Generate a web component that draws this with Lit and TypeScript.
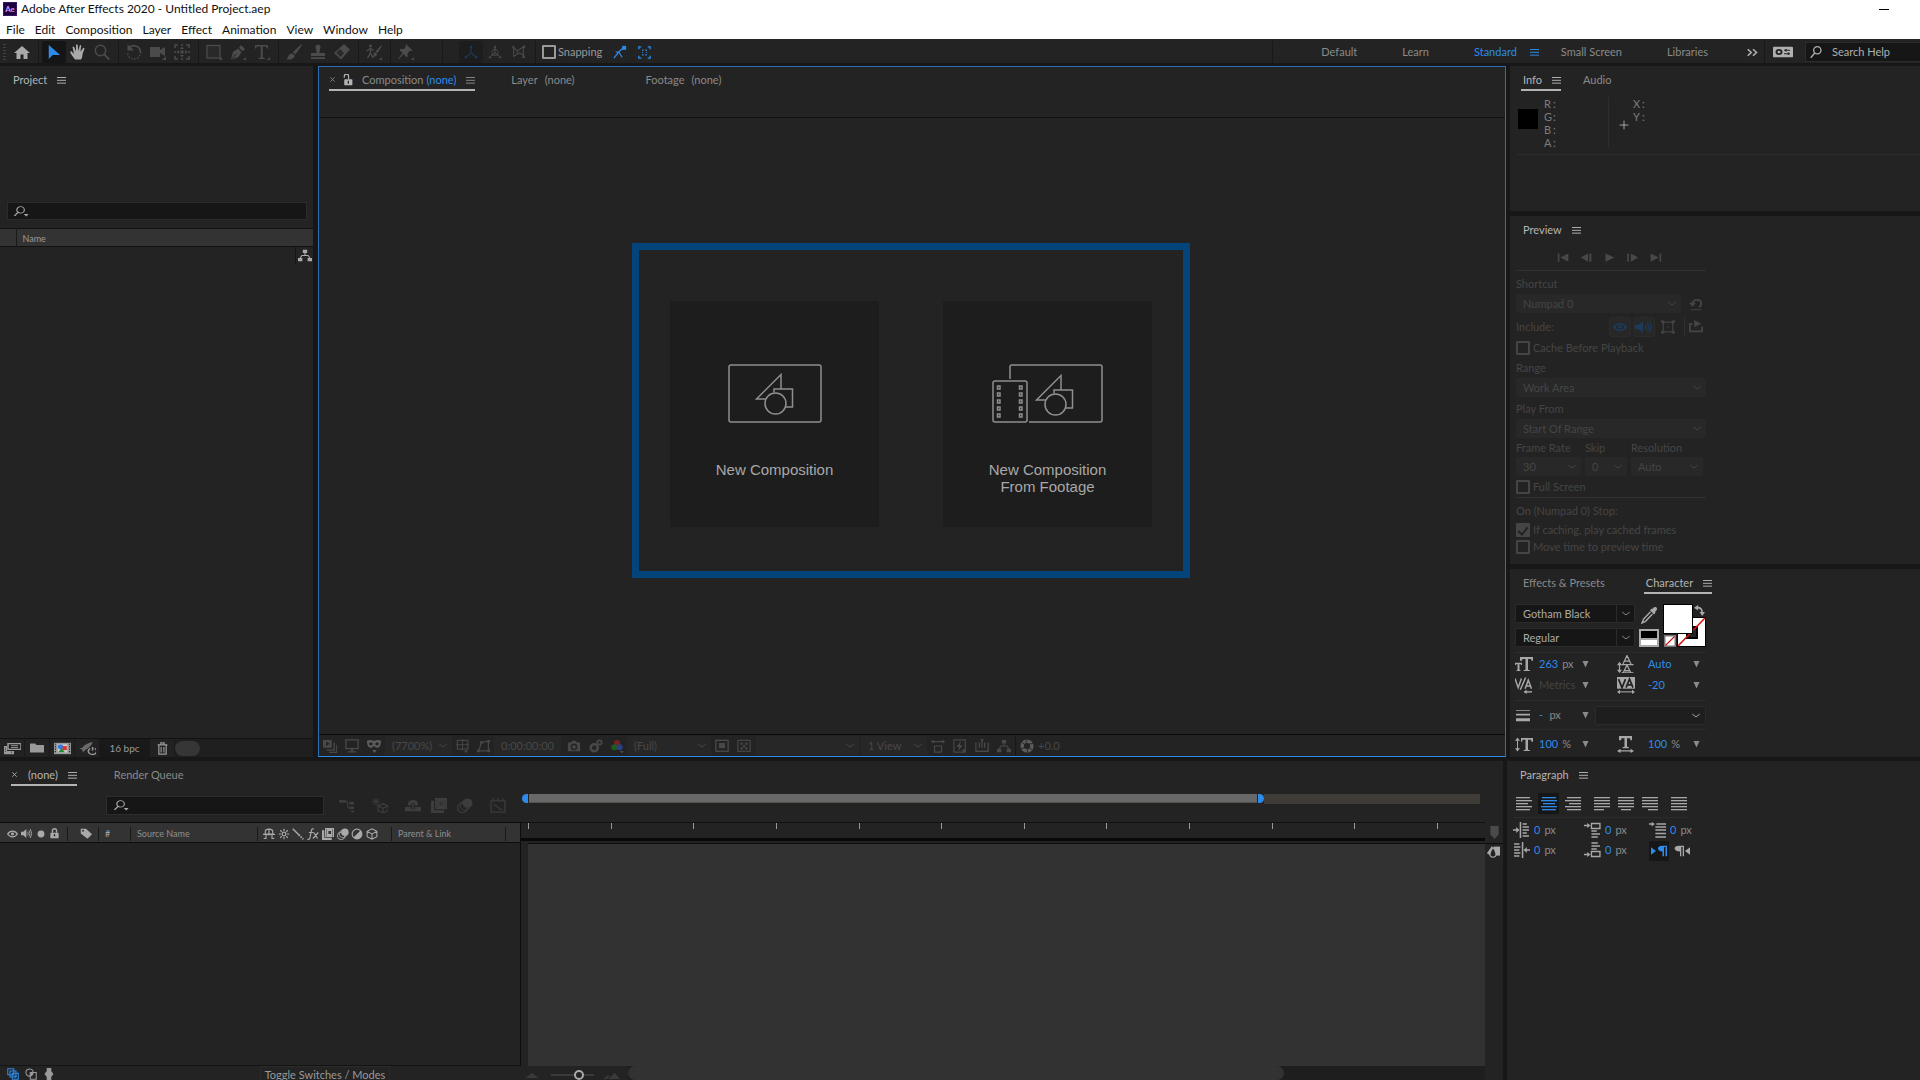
import { LitElement, html, svg, css, nothing, TemplateResult } from "lit";
import { customElement } from "lit/decorators.js";
import { classMap } from "lit/directives/class-map.js";

/* ---------- icons ---------- */

const icons: Record<string, TemplateResult> = {
  logo: svg`<rect width="16" height="16" rx="1" fill="#1f0040"/><rect x=".5" y=".5" width="15" height="15" fill="none" stroke="#3b1a66"/><text x="8" y="11.5" text-anchor="middle" font-size="9" font-weight="700" font-family="Lato, sans-serif" fill="#cf9bff">Ae</text>`,
  menu: svg`<path d="M0 4h16M0 8.500h16M0 13h16" stroke="currentColor" stroke-width="1.600"/>`,
  home: svg`<path d="M8 1 0 8.500h2.500V15h4v-5h3v5h4V8.500H16z" fill="currentColor"/>`,
  arrow: svg`<path d="M2 0v16l4.500-4.500H15z" fill="currentColor"/>`,
  hand: svg`<path d="M5 15.500C3 13 1 10 .3 8.500c-.5-1 .8-1.600 1.600-.7L4 10 2.600 3.500c-.2-1.200 1.200-1.500 1.600-.4L6 7.500 6 1.200c0-1.200 1.600-1.200 1.700 0L8.200 7l1.500-5.300c.3-1.100 1.700-.8 1.500.4L10.400 7.800 13 4.200c.7-.9 1.800-.2 1.400.8-1 2.500-1.700 4-2 6.500-.2 2-.8 3-1.400 4z" fill="currentColor"/>`,
  zoom: svg`<circle cx="6.500" cy="6.500" r="5.200" fill="none" stroke="currentColor" stroke-width="1.400"/><path d="m10.300 10.300 5 5.200" stroke="currentColor" stroke-width="1.800"/>`,
  search: svg`<circle cx="9.500" cy="6" r="4.200" fill="none" stroke="currentColor" stroke-width="1.500"/><path d="M6.700 9 2 14.500" stroke="currentColor" stroke-width="1.600"/>`,
  searchMenu: svg`<circle cx="7" cy="6" r="4" fill="none" stroke="currentColor" stroke-width="1.200"/><path d="M4.300 9 .5 13.500" stroke="currentColor" stroke-width="1.500"/><path d="M10.500 11h5L13 14z" fill="currentColor"/>`,
  rotate: svg`<path d="M3.500 3.500A6.500 6.500 0 0 1 14.500 8" fill="none" stroke="currentColor" stroke-width="1.600"/><path d="M14.500 8a6.500 6.500 0 1 1-13 1" fill="none" stroke="currentColor" stroke-width="1.500" stroke-dasharray="1.500 1.500"/><path d="M1.500 0v6.500H8z" fill="currentColor"/>`,
  camera: svg`<path d="M0 3h10v3l5-3v9l-5-3v4H0z" fill="currentColor"/><path d="M16 12v4h-4z" fill="currentColor"/>`,
  pan: svg`<path d="M1 4V1h3M12 1h3v3M15 12v3h-3M4 15H1v-3M7 1h2M7 15h2M1 7v2M15 7v2" fill="none" stroke="currentColor" stroke-width="1.500"/><circle cx="8" cy="8" r="1.800" fill="currentColor"/><path d="m8 2.500 2 2.500H6zM8 13.500 6 11h4zM2.500 8 5 6v4zM13.500 8 11 10V6z" fill="currentColor"/>`,
  rect: svg`<rect x="1" y="1.500" width="13" height="12.500" fill="#292929" stroke="currentColor" stroke-width="1.300"/><path d="M16 13v3h-3z" fill="currentColor"/>`,
  pen: svg`<path d="M1 15.500 3 8l5-3.500L11.500 8 8.500 13zM9 3.500 11 1l4 4-2.500 2.300z" fill="currentColor"/><path d="m2 14.500 4-4.500" stroke="#232323"/><path d="M16 13v3h-3z" fill="currentColor"/>`,
  type: svg`<path d="M1 1h13v3.500h-1.300L12.300 2.500H8.700v11l2 .5v1h-6v-1l2-.5v-11H2.700L2.300 4.500H1z" fill="currentColor"/><path d="M16 13v3h-3z" fill="currentColor"/>`,
  brush: svg`<path d="M15.500 0 16 1 9.500 10.500 6.800 8.300zM6 9.300l2.700 2.200C8.500 15 4 16 0 15.500c2.500-1 1.700-5.500 6-6.200z" fill="currentColor"/>`,
  stamp: svg`<path d="M5.500 3a2.500 2.500 0 0 1 5 0c0 2-1.200 3-1 6H15v3H1V9h5.500c.2-3-1-4-1-6zM1 13.300h14V15H1z" fill="currentColor"/>`,
  eraser: svg`<path d="M10 0 16 5.500 7 15.500 0 9z" fill="currentColor"/><path d="m2.300 8.800 3.600-3.900 4.200 4-3.500 4z" fill="#2a2a2a"/>`,
  roto: svg`<circle cx="4.500" cy="2" r="1.500" fill="currentColor"/><path d="M4.500 4v5l-3 5M4.500 9l2.500 5M.5 7l4-2.500 3 2" fill="none" stroke="currentColor" stroke-width="1.400"/><path d="M15.500 1 16 2l-4.500 7-2-1.500zM9 8.300l2 1.500c0 2.700-2.500 3.200-4.500 3 1.500-1 .5-3.800 2.500-4.500zM16 13v3h-3z" fill="currentColor"/>`,
  pin: svg`<path d="M8 0 14.500 6.500l-1.500.7-1-.4-2.500 2.700.3 3-1.200.7L5.400 10 1 15l-.8-.5L4.500 9 1.500 6l1-1.200 3 .4L8 2.500 7.500 1z" fill="currentColor"/><path d="M16 13v3h-3z" fill="currentColor"/>`,
  axis: svg`<path d="M8 1v8L2 14M8 9l6 5" fill="none" stroke="currentColor" stroke-width="1.200"/><path d="m8 0 1.800 3H6.200zM.5 15.500 2 12l2 2.500zM15.500 15.500 14 12l-2 2.500z" fill="currentColor"/>`,
  axisWorld: svg`<path d="M8 2v7l-5 4M8 9l5 4" fill="none" stroke="currentColor" stroke-width="1.200"/><circle cx="8" cy="8.500" r="3.600" fill="none" stroke="currentColor"/><path d="m8 0 1.800 3H6.200zM.5 15.500 2 12l2 2.500zM15.500 15.500 14 12l-2 2.500z" fill="currentColor"/>`,
  axisView: svg`<path d="M2 3l4 4 7-5v10l-4-3-7 4zM6 7v3M2 3v10" fill="none" stroke="currentColor" stroke-width="1.200"/><path d="m0 1 3.500 1L1 4.500zM15 0v4l-3.500-2zM15 15l-4-.5L14 11z" fill="currentColor"/>`,
  snapEdge: svg`<path d="M1 15 6.500 8l5-4.500M6.500 8l4 6M6.500 8H3" fill="none" stroke="currentColor" stroke-width="1.400"/><rect x="10.500" y="1" width="4.500" height="4.500" fill="currentColor"/>`,
  snapFrame: svg`<path d="M1 4V1h3M12 1h3v3M15 12v3h-3M4 15H1v-3" fill="none" stroke="currentColor" stroke-width="1.600"/><path d="M5 5h2M9 5h2M5 11h2M9 11h2M5 8h1M10 8h1" stroke="currentColor" stroke-width="1.500"/>`,
  more: svg`<path d="m2 4 4 4-4 4M8 4l4 4-4 4" fill="none" stroke="currentColor" stroke-width="2"/>`,
  sync: svg`<rect x="0" y="2" width="20" height="12" rx="1" fill="currentColor"/><circle cx="6" cy="8" r="2.500" fill="none" stroke="#232323" stroke-width="2"/><path d="M11 6h6M11 10h6" stroke="#232323" stroke-width="1.400"/><path d="M13 4.500v3M15.500 8.500v3" stroke="#232323" stroke-width="1.400"/>`,
  lock: svg`<rect x="2" y="7" width="12" height="8" rx="1" fill="currentColor"/><path d="M5 7V4a3 3 0 0 1 6 0v3" fill="none" stroke="currentColor" stroke-width="2"/><path d="M8 9v3" stroke="#232323" stroke-width="2"/>`,
  unlock: svg`<rect x="2" y="7" width="13" height="8" rx="1" fill="currentColor"/><path d="M2 5V3.500a3 3 0 0 1 7 0V7" fill="none" stroke="currentColor" stroke-width="1.800"/><path d="M8.500 9v4" stroke="#232323" stroke-width="2"/>`,
  flow: svg`<path d="M5.500 1h5v4h-5zM0 11h5v4H0zM11 11h5v4h-5z" fill="currentColor"/><path d="M8 5v3M2.500 11l2-3h7l2 3" fill="none" stroke="currentColor" stroke-width="1.300"/>`,
  interpret: svg`<path d="M5 2h13v7H5z" fill="none" stroke="currentColor" stroke-width="1.500"/><path d="M8 4.500h7M8 6.800h7" stroke="currentColor"/><path d="M1 5h3v6h7v4H1z" fill="currentColor"/><path d="M2.500 7v6M8 12.500h2" stroke="#232323" stroke-dasharray="1 1"/>`,
  folder: svg`<path d="M0 2h6l1.500 2H16v10H0z" fill="currentColor"/>`,
  comp: svg`<path d="M0 1h18v14H0z" fill="currentColor"/><path d="M1.500 2v12M16.500 2v12" stroke="#232323" stroke-width="1.200" stroke-dasharray="1.500 1.500"/><rect x="4" y="3" width="10" height="10" fill="#d0d0d0"/><circle cx="7" cy="6" r="2.800" fill="#2d7ceb"/><path d="M9 5h4.500v5H9z" fill="#d33"/><path d="m4.500 12.500 3.500-5 3.500 5z" fill="#2a8a3a"/>`,
  launch: svg`<path d="M13 0C9 1 5 3 3 7l-3 1 2.500 1L4 13l1.500-3C9 8 12 4 13 0z" fill="currentColor" opacity=".6"/><path d="M10.500 8a4 4 0 1 0 4.500 0M12.800 6v4.500" fill="none" stroke="currentColor" stroke-width="1.500"/>`,
  trash: svg`<path d="M2 3.500h12M6 3V1h4v2M3.500 4v11h9V4" fill="none" stroke="currentColor" stroke-width="1.500"/><path d="M6.300 6v7M9.700 6v7" stroke="currentColor" stroke-width="1.400"/>`,
  stack: svg`<path d="M0 1h10v9H0zM12 4v8H4v1.500h9.500V4zM15 6.500v8H7V16h9.500V6.500z" fill="currentColor"/><path d="m3.500 3 4 2.500-4 2.500z" fill="#232323"/>`,
  monitor: svg`<rect x="1" y="1" width="14" height="10" fill="none" stroke="currentColor" stroke-width="1.500"/><path d="M7 11h2v3h4v1.300H3V14h4z" fill="currentColor"/>`,
  mask: svg`<path d="M0 2c2.500-1.300 5-.8 8 .2 3-1 5.500-1.500 8-.2 0 5-1.500 8-4.500 8C9.500 10 9 8 8 8s-1.500 2-3.500 2C1.500 10 0 7 0 2z" fill="currentColor"/><ellipse cx="4.500" cy="5.500" rx="2" ry="1.800" fill="#232323"/><ellipse cx="11.500" cy="5.500" rx="2" ry="1.800" fill="#232323"/><path d="M6 12.500h5L8.500 16z" fill="currentColor"/>`,
  grid: svg`<rect x="1.500" y="1.500" width="12" height="10" fill="none" stroke="currentColor" stroke-width="1.300"/><path d="M7.500 0v13M0 6.500h15" stroke="currentColor"/><path d="M9 13h5l-2.500 3z" fill="currentColor"/>`,
  shapePath: svg`<path d="M2 13.500 5 4l8-1.500V13.500z" fill="none" stroke="currentColor" stroke-width="1.400"/><path d="M0 12h3v3H0zM3.500 2.500h3v3h-3zM12 1h3v3h-3zM12 12h3v3h-3z" fill="currentColor"/>`,
  snapshot: svg`<path d="M1 4h3.500L6 2h4l1.500 2H15v10H1z" fill="currentColor"/><circle cx="8" cy="9" r="3" fill="none" stroke="#232323" stroke-width="1.600"/>`,
  showSnap: svg`<circle cx="6" cy="10" r="4" fill="none" stroke="currentColor" stroke-width="3"/><circle cx="12" cy="4" r="2.500" fill="none" stroke="currentColor" stroke-width="2"/>`,
  rgb: svg`<circle cx="8" cy="4.500" r="3.500" fill="#7a2222"/><circle cx="5" cy="9.500" r="3.500" fill="#1f5a1f"/><circle cx="11" cy="9.500" r="3.500" fill="#2b3f86"/><path d="M11 14h5l-2.500 2z" fill="#555"/>`,
  roi: svg`<rect x="1" y="1.500" width="14" height="12.500" fill="none" stroke="currentColor" stroke-width="1.600"/><rect x="4.500" y="4.500" width="7" height="6" fill="currentColor"/>`,
  alpha: svg`<rect x="1" y="1.500" width="14" height="12.500" fill="none" stroke="currentColor" stroke-width="1.300"/><path d="M4 4h2.500v2.500H4zM9.500 4H12v2.500H9.500zM6.800 6.800h2.500v2.500H6.800zM4 9.500h2.500V12H4zM9.500 9.500H12V12H9.500z" fill="currentColor"/>`,
  chevron: svg`<path d="m2 5.500 6 5 6-5" fill="none" stroke="currentColor" stroke-width="1.600"/>`,
  aspect: svg`<path d="M1 3h14M4 8h8v7H4z" fill="none" stroke="currentColor" stroke-width="1.400"/><path d="m0 3 3-2.500v5zM16 3 13 .5v5z" fill="currentColor"/>`,
  fast: svg`<rect x="1" y="1" width="13" height="14" fill="none" stroke="currentColor" stroke-width="1.300"/><path d="M9 2 4 9h3l-1 5 5-7H8zM10 12h5l-2.500 4z" fill="currentColor"/>`,
  timelineBtn: svg`<path d="M1 4v10h14V4" fill="none" stroke="currentColor" stroke-width="1.500"/><path d="M5 4v6M8 1v9M11 4v6" stroke="currentColor" stroke-width="1.500"/><path d="M6 0h4L8 4z" fill="currentColor"/>`,
  aperture: svg`<circle cx="8" cy="8" r="5.500" fill="none" stroke="currentColor" stroke-width="4"/><path d="M8 .5 6 6M15 5l-5.500 1M14 12.500 10 9M8 15.500l1.800-5.500M1 11l5.500-1M2 3.500 6 7" stroke="#232323"/>`,
  first: svg`<path d="M1 2h2v12H1zM14 2v12L4 8z" fill="currentColor"/>`,
  prev: svg`<path d="M10 2v12L1 8zM11.500 2h2.500v12h-2.500z" fill="currentColor"/>`,
  play: svg`<path d="M3 2v12l11-6z" fill="currentColor"/>`,
  next: svg`<path d="M1.500 2h2v12h-2zM6 2v12l9-6z" fill="currentColor"/>`,
  last: svg`<path d="M2 2v12l10-6zM13 2h2v12h-2z" fill="currentColor"/>`,
  reset: svg`<path d="M4 8c0-6 9.500-6.500 10-1 0 2-1 4-2.500 4.500" fill="none" stroke="currentColor" stroke-width="2"/><path d="M0 6.500h8L4 11zM2 14h12v1.200H2z" fill="currentColor"/>`,
  eye: svg`<path d="M1 8c3.500-6 10.500-6 14 0-3.500 6-10.500 6-14 0z" fill="none" stroke="currentColor" stroke-width="2"/><circle cx="8" cy="8" r="2.300" fill="currentColor"/>`,
  speaker: svg`<path d="M0 5.500h3.500L8 1.500v13L3.500 10.500H0z" fill="currentColor"/><path d="M10 5.500q1.500 2.500 0 5M12 3.500q3 4.500 0 9M14 1.500q4 6.500 0 13" fill="none" stroke="currentColor" stroke-width="1.300"/>`,
  bounds: svg`<rect x="2.500" y="2.500" width="11" height="11" fill="none" stroke="currentColor" stroke-width="1.300"/><path d="M0 1.500h4M1.500 0v4M12 1.500h4M14.500 0v4M0 14.500h4M1.500 12v4M12 14.500h4M14.500 12v4M7 8h2" stroke="currentColor" stroke-width="1.300"/>`,
  exportIc: svg`<path d="M4 5H1v9h14V8" fill="none" stroke="currentColor" stroke-width="2"/><path d="M6 0 14 4.500 6 9z" fill="currentColor"/>`,
  eyedropper: svg`<path d="M15.500.5c1.500 1.500-.3 3.200-1.500 4.300l.5.700-1.500 1.500L9 3l1.500-1.500.7.500C12.300.8 14-1 15.500.5z" fill="currentColor"/><path d="m9.500 4.500-7 7L1 15l3.500-1.500 7-7" fill="none" stroke="currentColor" stroke-width="1.400"/>`,
  swap: svg`<path d="M4 4c5-1 8 2 8 8" fill="none" stroke="currentColor" stroke-width="2.500"/><path d="M6 0v8L0 4zM8 10h8l-4 6z" fill="currentColor"/>`,
  noColor: svg`<rect x="1" y="1" width="14" height="14" fill="#fff" stroke="#777" stroke-width="2"/><path d="M2 14 14 2" stroke="#d01010" stroke-width="1.500"/>`,
  fontSize: svg`<path d="M5 0h13v4h-1.500L16 2h-3v11.500l2 .5v1H8.500v-1l2-.5V2h-3L7 4H5z" fill="currentColor"/><path d="M0 6h7v2.500H6L5.500 7.500h-1v6l1 .5v1h-4v-1l1-.5v-6h-1L1 8.500H0z" fill="currentColor"/>`,
  leading: svg`<path d="M6 8 10 .5 14 8M7.500 5.500h5M6 16l4-7 4 7M7.500 14h5M4.500 8.500h12M4.500 16h12M2.500 7v8" fill="none" stroke="currentColor" stroke-width="1.200"/><path d="M0 9l2.500-3L5 9zM0 13h5l-2.500 3z" fill="currentColor"/>`,
  kerning: svg`<path d="M0 1.500 3 10l3-8.500M5 12 10 .5M9.500 11l3-8 3 8M10.500 8.500h4" fill="none" stroke="currentColor" stroke-width="1.400"/><path d="M9 14h7" stroke="currentColor" stroke-width="1.300"/><path d="M8 14 11 12v4z" fill="currentColor"/>`,
  tracking: svg`<path d="M0 0h18v11H0z" fill="currentColor"/><path d="M1.500 2 5 10l3.500-8M9 10l3.500-8L16 10M10.500 7.500h4" fill="none" stroke="#232323" stroke-width="1.700"/><path d="M2 14h14" stroke="currentColor"/><path d="m0 14 3-2v4zM18 14l-3-2v4z" fill="currentColor"/>`,
  strokeW: svg`<path d="M1 2h14v1H1zM1 6h14v2H1zM1 11h14v3H1z" fill="currentColor"/>`,
  vScale: svg`<path d="M6 1h12v4h-1.500L16 3h-3v10.500l2 .5v1H8.500v-1l2-.5V3h-3L7 5H6zM2 3h1v10H2z" fill="currentColor"/><path d="M0 4 2.500.5 5 4zM0 12h5l-2.500 3.500z" fill="currentColor"/>`,
  hScale: svg`<path d="M2 0h13v4h-1.500L13 2h-3v8l2 .5v1H5.500v-1l2-.5V2h-3L4 4H2zM3 13.500h11v1H3z" fill="currentColor"/><path d="m0 14 3.500-2v4zM17 14l-3.500-2v4z" fill="currentColor"/>`,
  indentL: svg`<path d="M0 8h5M7 0v16M9 2h4M9 5h6M9 8h6M9 11h4M9 14h6" stroke="currentColor" stroke-width="1.400"/><path d="m3 5 3 3-3 3z" fill="currentColor"/>`,
  indentR: svg`<path d="M16 8h-5M9 0v16M1 2h5M1 5h6M1 8h5M1 11h6M1 14h5" stroke="currentColor" stroke-width="1.400"/><path d="m13 5-3 3 3 3z" fill="currentColor"/>`,
  spaceB: svg`<path d="M0 3.500h4M7 9h5M7 12h8M7 15h6" stroke="currentColor" stroke-width="1.300"/><path d="M7 1.500h8v5H7z" fill="none" stroke="currentColor" stroke-width="1.300"/><path d="m3 1 3 2.500L3 6z" fill="currentColor"/>`,
  spaceA: svg`<path d="M0 12.500h4M7 1h6M7 4h8M7 7h5" stroke="currentColor" stroke-width="1.300"/><path d="M7 9.500h8v5H7z" fill="none" stroke="currentColor" stroke-width="1.300"/><path d="m3 10 3 2.500L3 15z" fill="currentColor"/>`,
  firstLine: svg`<path d="M0 2h3M7 2h9M6 5h10M6 8h10M6 11.500h10M6 15h10" stroke="currentColor" stroke-width="1.300"/><path d="m2.500 0 3 2-3 2.500z" fill="currentColor"/>`,
  ltr: svg`<path d="m0 3 5 5-5 5zM16 1v14h-1.500V2.500H13V15h-1.500V8.500C5.500 8.500 5.500 1 11 1z" fill="currentColor"/>`,
  rtl: svg`<path d="m16 3-5 5 5 5zM10 1v14H8.700V2.500H7.300V15H6V8.500C-1 8.500-1 1 5 1z" fill="currentColor"/>`,
  dot: svg`<circle cx="8" cy="8" r="5.500" fill="currentColor"/>`,
  tag: svg`<path d="M1 1h7l8 8-6 6.500L1 8z" fill="currentColor"/><circle cx="4" cy="4" r="1.300" fill="#333"/>`,
  shy: svg`<path d="M3 8V5q0-3.500 5-3.500T13 5v3zM0 8.500h16M8 2v8M4 9v5H1M12 9v5h3" fill="none" stroke="currentColor" stroke-width="1.500"/>`,
  sun: svg`<circle cx="8" cy="8" r="2.500" fill="none" stroke="currentColor" stroke-width="1.600"/><path d="M8 1v3M8 12v3M1 8h3M12 8h3M3 3l2 2M11 11l2 2M13 3l-2 2M5 11l-2 2" stroke="currentColor" stroke-width="1.500"/>`,
  quality: svg`<path d="m1 1 8 8" stroke="currentColor" stroke-width="1.800"/><path d="m9 9 6 6" stroke="currentColor" stroke-width="2.500" stroke-dasharray="2 1.500"/>`,
  fx: svg`<path d="M9 1.500C6.500.5 6 2 5.500 5L4 13c-.4 2-1.500 2.500-3.500 2M2.500 6h6M9 6l5 8M15 6l-7 8" fill="none" stroke="currentColor" stroke-width="1.600"/>`,
  frameBlend: svg`<path d="M4 0h12v12H4zM0 3h3v10h10v3H0z" fill="currentColor"/><path d="M6 2v9M14 2v9" stroke="#333" stroke-dasharray="1.500 1"/><path d="M8.500 4h3.500v4H8.500z" fill="#333"/>`,
  motionBlur: svg`<circle cx="10.500" cy="5.500" r="5" fill="currentColor"/><circle cx="8" cy="8" r="5" fill="none" stroke="currentColor"/><circle cx="5.500" cy="10.500" r="5" fill="none" stroke="currentColor" stroke-width="1.200"/>`,
  adjust: svg`<circle cx="8" cy="8" r="6.500" fill="none" stroke="currentColor" stroke-width="1.500"/><path d="M12.600 3.400a6.500 6.500 0 0 1-9.200 9.200z" fill="currentColor"/>`,
  cube: svg`<path d="m8 1 6.500 3.500v7L8 15l-6.500-3.500v-7zM1.500 4.500 8 8l6.500-3.500M8 8v7" fill="none" stroke="currentColor" stroke-width="1.400"/>`,
  miniFlow: svg`<path d="M0 2h7v3H0zM10 4h5v3h-5zM10 9h5v3h-5zM11 13.500h5L13.500 16z" fill="currentColor"/><path d="M7 3.500h1.500v7H10" fill="none" stroke="currentColor"/>`,
  draft3d: svg`<path d="M4 0v8M0 4h8M1 1l6 6M7 1 1 7" stroke="currentColor"/><path d="m11 6 5 2.500v5L11 16l-5-2.500v-5zM6 8.500 11 11l5-2.500M11 11v5" fill="none" stroke="currentColor" stroke-width="1.200"/>`,
  hideShy: svg`<path d="M3 8V6q0-4 5-4t5 4v2h-2.500L8 5 5.500 8zM0 9.500h6V12h4V9.500h6V14H0z" fill="currentColor"/><path d="M8 6v6" stroke="currentColor" stroke-width="1.500"/>`,
  graph: svg`<rect x="1" y="3" width="14" height="12" fill="none" stroke="currentColor" stroke-width="1.200"/><path d="M3 0v3M8 0v3M13 0v3M3.500 7C8 7 7 12.500 12.500 12.500" fill="none" stroke="currentColor" stroke-width="1.200"/>`,
  shield: svg`<path d="M2 0h12v10l-6 6-6-6z" fill="currentColor"/>`,
  marker: svg`<path d="M7 1v13l-6-4z" fill="currentColor"/><path d="M9 2h7v11H9z" fill="currentColor"/><path d="M8 3c-2 3-3.500 5-3.500 8a3.500 4 0 0 0 7 0C11.500 8 10 6 8 3z" fill="#232323" stroke="currentColor" stroke-width="1.400"/>`,
  switches: svg`<path d="M1 1h8v8H1zM4 4h8v8H4zM7 7h8v8H7z" fill="#232323" stroke="currentColor" stroke-width="1.400"/><path d="M9 11h4M11 9v4" stroke="currentColor"/>`,
  modes: svg`<circle cx="6" cy="6" r="4.800" fill="none" stroke="currentColor" stroke-width="1.400"/><path d="M7 6h8v9H7z" fill="none" stroke="currentColor" stroke-width="1.400"/><path d="M7 6h4q0 4-4 5z" fill="currentColor"/>`,
  brackets: svg`<path d="M5 0h6v4l3 4-3 4v4H5v-4L2 8l3-4z" fill="currentColor"/>`,
  hillSmall: svg`<path d="m3 11 5-5 5 5z" fill="currentColor"/>`,
  hillBig: svg`<path d="m5 14 6-11 5 11zM0 14l5-7 1.500 1.500L3.500 14z" fill="currentColor"/>`,
  plus: svg`<path d="M8 1v14M1 8h14" stroke="currentColor" stroke-width="1.500"/>`,
  tri: svg`<path d="M1 2h14L8 15z" fill="currentColor"/>`,
  close: svg`<path d="m3 3 10 10M13 3 3 13" stroke="currentColor" stroke-width="2"/>`,
};

const icon = (name: string, w = 16, h = w, vw = 16) =>
  html`<svg class="icon" width=${w} height=${h} viewBox="0 0 ${vw} 16" preserveAspectRatio="none" aria-hidden="true">${icons[name]}</svg>`;

/** Text lines whose lengths and anchoring describe a justification mode. */
const alignIcon = (mode: string) => {
  const widths = mode.startsWith("full") ? [16, 16, 16, 16, mode === "full" ? 16 : 10] : [14, 16, 12, 16, 14];
  const place = (w: number) =>
    mode.endsWith("right") ? 16 - w : mode.endsWith("center") ? (16 - w) / 2 : 0;
  return html`<svg class="icon" width="16" height="15" viewBox="0 0 16 15" aria-hidden="true">
    ${widths.map((w, i) => svg`<rect x=${place(w)} y=${i * 3 + 1} width=${w} height="1.300" fill="currentColor"/>`)}
  </svg>`;
};

/* ---------- shared styles ---------- */

const base = css`
  :host { display: flex; flex-direction: column; min-width: 0; }
  * { box-sizing: border-box; }
  .icon { display: block; flex: none; }
  button, input, select, a {
    font: inherit; color: inherit; background: none; border: 0; padding: 0; margin: 0;
    text-decoration: none; outline: 0; border-radius: 0; min-width: 0;
  }
  button { display: flex; align-items: center; justify-content: center; cursor: default; white-space: nowrap; }
  input::placeholder { color: inherit; opacity: 1; }
  .row { display: flex; align-items: center; }
  .grow { flex: 1; min-width: 0; }
  .tabs { display: flex; align-items: flex-start; height: 28px; flex: none; padding: 4px 0 0 11px; }
  .tab {
    display: flex; align-items: center; height: 21px; color: #8a8a8a; white-space: nowrap;
    border-bottom: 2px solid transparent; justify-content: flex-start; padding-left: 2px;
  }
  .tab.closable { padding-left: 0; }
  .tab.on { color: #b4b4b4; }
  .tab.line { border-color: #b4b4b4; }
  .tab .menu { margin-left: 10px; }
  .rule { height: 1px; background: #303030; flex: none; }
  .box {
    appearance: none; width: 14px; height: 14px; border: 2px solid currentColor; border-radius: 1px;
    flex: none; display: grid; place-items: center;
  }
  .box:checked { background: currentColor; }
  .box:checked::after {
    content: ""; width: 4px; height: 8px; border: solid #232323; border-width: 0 2px 2px 0; rotate: 40deg;
  }
  .check { display: flex; align-items: center; gap: 3px; height: 17px; }
  .pick { display: grid; align-items: center; background: #282828; border-radius: 2px; height: 19px; }
  .pick > * { grid-area: 1 / 1; }
  .pick select { appearance: none; width: 100%; height: 100%; padding: 0 20px 0 7px; }
  .pick .icon { justify-self: end; margin-right: 4px; pointer-events: none; }
`;

const menuIcon = html`<span class="menu">${icon("menu", 9, 10)}</span>`;

const pick = (label: string, value: string, cls = "") => html`
  <span class="pick ${cls}">
    <select aria-label=${label}>${value ? html`<option>${value}</option>` : html`<option label=" "></option>`}</select>
    ${icon("chevron", 10, 9)}
  </span>`;

/* ---------- title and menu ---------- */

@customElement("title-bar")
class TitleBar extends LitElement {
  static styles = [base, css`
    :host { background: #fff; color: #111; height: 39px; flex: none; font-size: 12px; }
    .title { height: 18px; padding: 0 31px 0 3px; gap: 4px; }
    .min { margin-left: auto; width: 10px; height: 1px; background: #000; }
    nav { display: flex; height: 21px; align-items: center; padding: 2px 0 0 6px; gap: 10px; }
  `];
  render() {
    return html`
      <div class="row title">${icon("logo", 14, 14)}<span>Adobe After Effects 2020 - Untitled Project.aep</span>
        <button class="min" aria-label="Minimize"></button></div>
      <nav>${["File", "Edit", "Composition", "Layer", "Effect", "Animation", "View", "Window", "Help"]
        .map((m) => html`<button>${m}</button>`)}</nav>`;
  }
}

/* ---------- toolbar ---------- */

const toolGroups = [
  ["arrow", "hand", "zoom"],
  ["rotate", "camera", "pan"],
  ["rect", "pen", "type"],
  ["brush", "stamp", "eraser"],
  ["roto"],
  ["pin"],
];

@customElement("tool-bar")
class ToolBar extends LitElement {
  static styles = [base, css`
    :host { flex-direction: row; align-items: center; height: 24px; padding-top: 2px; box-sizing: border-box; background: #232323; flex: none; color: #4b4b4b; white-space: nowrap; }
    .grip { width: 3px; height: 16px; margin: 0 4px 0 3px; background: repeating-linear-gradient(#444 0 1px, transparent 1px 3px); }
    .home { width: 24px; color: #aaa; }
    .sep { width: 1px; height: 22px; background: #181818; margin: 0 3px 0 4px; flex: none; }
    .tool { width: 24px; height: 22px; flex: none; }
    .tool.on { color: #2d8ceb; background: #151515; border-radius: 2px; }
    .tool.lit { color: #aaa; }
    .axes { padding-left: 13px; }
    .axes .on { color: #1d3d5e; background: #1d1d1d; }
    .snap { color: #9a9a9a; gap: 2px; padding-left: 3px; margin-right: 6px; }
    .blue { color: #2d8ceb; }
    .gap { width: 20px; flex: none; }
    .ws { color: #8a8a8a; gap: 45px; }
    .ws .on { display: flex; align-items: center; gap: 13px; color: #2d8ceb; margin-right: -23px; }
    .more { margin-left: 38px; color: #aaa; }
    .sync { width: 30px; color: #b0b0b0; }
    .help { display: flex; align-items: center; height: 20px; width: 115px; background: #161616; padding-left: 3px; gap: 9px; color: #b0b0b0; border: 1px solid #2b2b2b; border-right: 0; margin-left: 7px; }
    .help input { width: 80px; }
  `];
  render() {
    return html`
      <span class="grip"></span>
      <button class="home" aria-label="Home">${icon("home", 16, 15)}</button>
      ${toolGroups.map((g) => html`<span class="sep"></span>${g.map((t) => html`
        <button class="tool ${classMap({ on: t === "arrow", lit: t === "hand" })}" aria-label=${t}>${icon(t, t === "arrow" ? 14 : 16)}</button>`)}`)}
      <span class="gap"></span><span class="sep"></span>
      <span class="row axes">
        ${["axis", "axisWorld", "axisView"].map((t, i) => html`<button class="tool ${classMap({ on: i === 0 })}" aria-label=${t}>${icon(t, 14)}</button>`)}
      </span>
      <span class="sep"></span>
      <label class="check snap"><input class="box" type="checkbox">Snapping</label>
      <button class="tool blue" aria-label="Snap to edges">${icon("snapEdge", 14)}</button>
      <button class="tool blue" aria-label="Snap to frame">${icon("snapFrame", 13)}</button>
      <span class="grow"></span>
      <span class="sep"></span>
      <nav class="row ws"><span></span>
        ${["Default", "Learn", "Standard", "Small Screen", "Libraries"].map((w) => html`
          <a href="#${w}" class=${w === "Standard" ? "on" : nothing}>${w}${w === "Standard" ? icon("menu", 9, 10) : nothing}</a>`)}
      </nav>
      <button class="more" aria-label="More workspaces">${icon("more", 14, 13)}</button>
      <span class="sep"></span>
      <button class="sync" aria-label="Sync settings">${icon("sync", 20, 14, 20)}</button>
      <label class="help">${icon("search", 14)}<input aria-label="Search Help" placeholder="Search Help"></label>`;
  }
}

/* ---------- project ---------- */

@customElement("project-panel")
class ProjectPanel extends LitElement {
  static styles = [base, css`
    :host { width: 313px; background: #232323; margin-right: 5px; flex: none; }
    .thumb { height: 108px; flex: none; }
    .find { display: flex; align-items: center; height: 18px; margin: 0 6px 8px 7px; padding-left: 6px; background: #161616; border: 1px solid #2b2b2b; color: #aaa; }
    .find input { flex: 1; }
    table { border-collapse: collapse; width: 100%; height: 19px; background: #333; border: solid #111; border-width: 1px 0; font-size: 9px; color: #9a9a9a; }
    th { font-weight: 400; text-align: left; padding: 2px 0 0 6px; border-left: 1px solid #191919; }
    th:first-child { width: 16px; border: 0; }
    .list { display: flex; flex: 1; justify-content: flex-end; align-items: flex-start; }
    .flow { width: 18px; height: 17px; border-left: 1px solid #151515; color: #aaa; }
    .foot { height: 19px; border-top: 1px solid #121212; background: #1f1f1f; color: #9a9a9a; }
    .foot button { height: 100%; background: #222; border-right: 1px solid #1a1a1a; width: 25px; }
    .foot .depth { width: 50px; font-size: 10px; background: #191919; }
    .pill { width: 25px; height: 15px; border-radius: 8px; background: #363636; }
  `];
  render() {
    return html`
      <div class="tabs"><button class="tab on">Project${menuIcon}</button></div>
      <div class="thumb"></div>
      <label class="find">${icon("searchMenu", 15, 13)}<input aria-label="Search project"></label>
      <table><thead><tr><th></th><th>Name</th></tr></thead></table>
      <div class="list"><button class="flow" aria-label="Flowchart">${icon("flow", 14, 13)}</button></div>
      <div class="row foot">
        <button aria-label="Interpret footage">${icon("interpret", 18, 13, 18)}</button>
        <button aria-label="New folder">${icon("folder", 14, 12)}</button>
        <button aria-label="New composition">${icon("comp", 17, 13, 18)}</button>
        <button aria-label="Project settings">${icon("launch", 17, 13)}</button>
        <button class="depth">16 bpc</button>
        <button aria-label="Delete">${icon("trash", 13)}</button>
        <span class="pill"></span>
      </div>`;
  }
}

/* ---------- composition ---------- */

const shapes = svg`<path d="M66 26V11.500L41.500 36h9.500M59 29.500V26h18.500v18h-7" fill="none"/><circle cx="60.500" cy="40.500" r="10.500" fill="none"/>`;

@customElement("composition-panel")
class CompositionPanel extends LitElement {
  static styles = [base, css`
    :host { flex: 1; background: #232323; border: 1px solid #2d6fb5; border-bottom-color: #2d8ceb; }
    .tabs { height: 51px; padding: 3px 0 0 10px; border-bottom: 1px solid #111; }
    .tab .blue { color: #2d8ceb; margin-left: 3px; }
    .tab .x { margin-right: 7px; }
    .tab .lock { margin-right: 9px; color: #b4b4b4; }
    .tab.none { margin-left: 34px; }
    .tab.footage { margin-left: 69px; }
    .tab .gap { margin-left: 7px; }
    .stage { flex: 1; display: grid; place-content: center; padding: 0 2px 31px 0; }
    .start { display: flex; gap: 64px; border: 7px solid #03457a; padding: 51px 31px 44px; }
    .card { width: 209px; height: 226px; background: #1d1d1d; flex-direction: column; justify-content: flex-start; padding-top: 62px; font: 15px/17px "Liberation Sans", Arial, sans-serif; color: #a8a8a8; }
    .card svg { display: block; stroke: #8d8f90; stroke-width: 1.500; }
    .card span { margin-top: 32px; }
    .foot { height: 22px; border-top: 1px solid #0c0c0c; color: #484848; white-space: nowrap; overflow: hidden; }
    .foot button { width: 22px; height: 20px; flex: none; }
    .foot .tight { width: 21px; }
    .foot .lit { color: #5c5c5c; }
    .foot .pick { flex: none; background: #272727; }
    .zoom { width: 67px; }
    .time { width: 67px; height: 19px; text-align: center; flex: none; }
    .foot .time { background: #272727; margin-right: 2px; }
    .full { width: 84px; } .three { width: 103px; margin: 0 2px; } .view { width: 66px; }
    .foot .sep { width: 1px; height: 20px; background: #181818; }
  `];
  render() {
    const tool = (n: string, c = "") => html`<button class=${c} aria-label=${n}>${icon(n, 14)}</button>`;
    return html`
      <div class="tabs">
        <button class="tab line closable"><span class="x">${icon("close", 7, 7)}</span><span class="lock">${icon("unlock", 10, 12)}</span>Composition<span class="blue">(none)</span>${menuIcon}</button>
        <button class="tab none">Layer<span class="gap">(none)</span></button>
        <button class="tab footage">Footage<span class="gap">(none)</span></button>
      </div>
      <div class="stage"><div class="start">
        <button class="card">
          <svg width="120" height="66" viewBox="0 0 120 66" aria-hidden="true"><rect x="14" y="2" width="92" height="57" rx="2" fill="none"/>${shapes}</svg>
          <span>New Composition</span>
        </button>
        <button class="card">
          <svg width="120" height="66" viewBox="0 0 120 66" aria-hidden="true">
            <path d="M22 16V4q0-2 2-2h88q2 0 2 2v53q0 2-2 2H41" fill="none"/>
            <rect x="5" y="18" width="34" height="41" rx="2" fill="none"/>
            ${[24, 31, 38, 45, 52].map((y) => svg`<rect x="9.500" y=${y - 1} width="2.500" height="3" fill="none"/><rect x="31.500" y=${y - 1} width="2.500" height="3" fill="none"/>`)}
            <g transform="translate(7 1)">${shapes}</g></svg>
          <span>New Composition<br>From Footage</span>
        </button>
      </div></div>
      <div class="row foot">
        ${tool("stack")}${tool("monitor")}${tool("mask", "lit")}
        ${pick("Magnification", "(7700%)", "zoom")}
        ${tool("grid", "tight")}${tool("shapePath", "tight")}
        <input class="time" aria-label="Current time" value="0:00:00:00">
        ${tool("snapshot")}${tool("showSnap", "tight")}${tool("rgb", "tight")}
        ${pick("Resolution", "(Full)", "full")}
        ${tool("roi")}${tool("alpha", "tight")}
        ${pick("3D view", "", "three")}
        ${pick("View layout", "1 View", "view")}
        ${["aspect", "fast", "timelineBtn", "flow"].map((n) => tool(n))}
        <span class="sep"></span>
        ${tool("aperture", "lit")}<span>+0.0</span>
      </div>`;
  }
}

/* ---------- info ---------- */

@customElement("info-panel")
class InfoPanel extends LitElement {
  static styles = [base, css`
    :host { background: #232323; height: 145px; flex: none; }
    .tab.second { margin-left: 20px; }
    .body { display: flex; height: 61px; padding-left: 1px; border-bottom: 1px solid #2c2c2c; margin-left: 7px; color: #7c7c7c; line-height: 13px; }
    .sw { width: 20px; height: 20px; background: #000; margin: 15px 6px 0 0; }
    .chan { display: grid; grid-template-columns: 9px 1fr; width: 65px; margin: 3px 0 6px; border-right: 1px solid #2e2e2e; align-content: start; }
    .cross { margin: 26px 4px 0 10px; color: #aaa; }
    .pos { display: grid; grid-template-columns: 9px 1fr; align-content: start; margin-top: 3px; }
  `];
  render() {
    return html`
      <div class="tabs"><button class="tab on line">Info${menuIcon}</button><button class="tab second">Audio</button></div>
      <div class="body"><span class="sw"></span>
        <span class="chan">${["R", "G", "B", "A"].map((c) => html`<span>${c}</span><span>:</span>`)}</span>
        <span class="cross">${icon("plus", 10)}</span>
        <span class="pos">${["X", "Y"].map((c) => html`<span>${c}</span><span>:</span>`)}</span>
      </div>`;
  }
}

/* ---------- preview ---------- */

@customElement("preview-panel")
class PreviewPanel extends LitElement {
  static styles = [base, css`
    :host { background: #232323; height: 348px; flex: none; margin-top: 5px; color: #454545; }
    .form { width: 190px; margin-left: 6px; display: flex; flex-direction: column; }
    .play { gap: 7px; padding-left: 39px; height: 26px; color: #484848; }
    .play button { width: 16px; }
    .label { height: 22px; line-height: 24px; }
    .rule { margin: 0 0 1px; }
    .short .pick { width: 165px; margin-right: 8px; }
    .include { height: 26px; gap: 2px; padding-top: 1px; }
    .include span { flex: 1; }
    .include button { width: 22px; height: 20px; }
    .include .on { color: #1d3a5a; background: #272727; border: 1px solid #2b2b2b; border-radius: 2px; }
    .include .out { border-left: 1px solid #303030; margin-left: 3px; }
    .trio { display: grid; grid-template-columns: 65px 42px 72px; column-gap: 4px; }
    .trio .label { height: 19px; line-height: 20px; }
    .full { margin: 2px 0; }
  `];
  render() {
    return html`
      <div class="tabs"><button class="tab on">Preview${menuIcon}</button></div>
      <div class="form">
        <div class="row play">${["first", "prev", "play", "next", "last"].map((n) => html`<button aria-label=${n}>${icon(n, 13, 11)}</button>`)}</div>
        <div class="rule"></div>
        <span class="label">Shortcut</span>
        <div class="row short">${pick("Shortcut", "Numpad 0")}<button aria-label="Reset">${icon("reset", 14)}</button></div>
        <div class="row include"><span>Include:</span>
          <button class="on" aria-label="Video">${icon("eye", 14, 12)}</button>
          <button class="on" aria-label="Audio">${icon("speaker", 18, 14, 18)}</button>
          <button aria-label="Overlays">${icon("bounds", 14)}</button>
          <button class="out" aria-label="Loop">${icon("exportIc", 14, 13)}</button>
        </div>
        <label class="check"><input class="box" type="checkbox">Cache Before Playback</label>
        <span class="label">Range</span>
        ${pick("Range", "Work Area")}
        <span class="label">Play From</span>
        ${pick("Play From", "Start Of Range")}
        <div class="trio">
          <span class="label">Frame Rate</span><span class="label">Skip</span><span class="label">Resolution</span>
          ${pick("Frame Rate", "30")}${pick("Skip", "0")}${pick("Resolution", "Auto")}
        </div>
        <label class="check full"><input class="box" type="checkbox">Full Screen</label>
        <div class="rule"></div>
        <span class="label">On (Numpad 0) Stop:</span>
        <label class="check"><input class="box" type="checkbox" checked>If caching, play cached frames</label>
        <label class="check"><input class="box" type="checkbox">Move time to preview time</label>
      </div>`;
  }
}

/* ---------- numeric fields ---------- */

const valueStyles = css`
  .num { display: flex; align-items: center; gap: 4px; color: #8a8a8a; white-space: nowrap; }
  .num input { color: #2d8ceb; }
  .num.off input { color: #444; }
`;

const num = (label: string, value: string, unit = "", cls = "") => html`
  <label class="num ${cls}"><input aria-label=${label} value=${value} style="width:${value.length}ch">${unit}</label>`;

/* ---------- character ---------- */

@customElement("character-panel")
class CharacterPanel extends LitElement {
  static styles = [base, valueStyles, css`
    :host { background: #232323; margin-top: 5px; flex: 1; overflow: hidden; }
    .tab.second { margin-left: 39px; }
    .form { width: 191px; margin: 7px 0 0 5px; color: #aaa; }
    .fonts { display: grid; grid-template-columns: 120px 20px 43px; column-gap: 4px; height: 43px; }
    .col { display: flex; flex-direction: column; gap: 5px; }
    .fonts .pick { background: #161616; border: 1px solid #2b2b2b; }
    .fonts .pick .icon { box-sizing: content-box; padding: 4px 3px 4px 4px; border-left: 1px solid #2b2b2b; margin: 0; color: #888; }
    .drop { margin: 3px auto 0; }
    .bw { height: 18px; margin-top: 5px; border: 2px solid #aaa; background: linear-gradient(#000 0 7px, #aaa 7px 9px, #fff 9px); }
    .swatches { display: grid; grid-template-columns: 14px 16px 13px; grid-template-rows: 13px 17px 13px; }
    .swatches > * { width: 100%; height: 100%; }
    .fill { grid-area: 1 / 1 / 3 / 3; background: #fff; border: 1px solid #000; z-index: 1; }
    .stroke { grid-area: 2 / 2 / 4 / 4; }
    .stroke svg { width: 100%; height: 100%; }
    .swap { grid-area: 1 / 3; }
    .zero { grid-area: 3 / 1; }
    .metrics { display: grid; grid-template-columns: 24px 43px 35px 31px 45px 13px; align-items: center; height: 22px; }
    .metrics.second { height: 20px; }
    .metrics.low { height: 26px; padding-top: 2px; }
    .metrics .icon { color: #a8a8a8; }
    .metrics .tri .icon { color: #8a8a8a; }
    .rule { margin: 5px 0 0; background: #2c2c2c; }
    .rule.flat { margin: 0; }
    .stroke-row { height: 28px; }
    .stroke-row .pick { grid-column: 4 / 7; background: #1e1e1e; border: 1px solid #2b2b2b; margin-left: -22px; }
  `];
  render() {
    const tri = html`<span class="tri">${icon("tri", 7, 8)}</span>`;
    return html`
      <div class="tabs"><button class="tab">Effects &amp; Presets</button><button class="tab on line second">Character${menuIcon}</button></div>
      <div class="form">
        <div class="fonts">
          <div class="col">${pick("Font family", "Gotham Black")}${pick("Font style", "Regular")}</div>
          <div><button class="drop" aria-label="Eyedropper">${icon("eyedropper", 17, 17, 17)}</button><div class="bw"></div></div>
          <div class="swatches">
            <button class="fill" aria-label="Fill colour"></button>
            <button class="swap" aria-label="Swap">${icon("swap", 11, 11)}</button>
            <button class="zero" aria-label="No colour">${icon("noColor", 12, 12)}</button>
            <button class="stroke" aria-label="Stroke colour"><svg viewBox="0 0 29 30" aria-hidden="true"><path d="M0 0h29v30H0z"/><path d="M1 1h27v28H1z" fill="#fff"/><path d="M10 10h10v11H10z" fill="#232323" stroke="#000" stroke-width="2"/><path d="M1 29 28 1" stroke="#d01010" stroke-width="1.500"/></svg></button>
          </div>
        </div>
        <div class="rule"></div>
        <div class="metrics">${icon("fontSize", 18, 15, 18)}${num("Font size", "263", "px")}${tri}${icon("leading", 17, 18, 17)}${num("Leading", "Auto")}${tri}</div>
        <div class="metrics second">${icon("kerning", 17, 17)}${num("Kerning", "Metrics", "", "off")}${tri}${icon("tracking", 18, 17, 18)}${num("Tracking", "-20")}${tri}</div>
        <div class="rule"></div>
        <div class="metrics stroke-row">${icon("strokeW", 16, 15)}${num("Stroke width", "-", "px")}${tri}${pick("Stroke style", "")}</div>
        <div class="rule flat"></div>
        <div class="metrics low">${icon("vScale", 18, 15, 18)}${num("Vertical scale", "100", "%")}${tri}${icon("hScale", 17, 17, 17)}${num("Horizontal scale", "100", "%")}${tri}</div>
      </div>`;
  }
}

/* ---------- paragraph ---------- */

@customElement("paragraph-panel")
class ParagraphPanel extends LitElement {
  static styles = [base, valueStyles, css`
    :host { background: #232323; width: 413px; margin-left: 4px; flex: none; color: #a8a8a8; }
    .aligns { padding: 4px 0 3px 5px; }
    .aligns button { width: 24px; height: 21px; }
    .aligns .on { color: #2d8ceb; background: #161616; width: 21px; margin: 0 2px; }
    .aligns button:nth-child(4), .aligns button:nth-child(7) { margin-left: 5px; }
    .rule { margin: 0 0 0 7px; width: 175px; background: #2c2c2c; }
    .grid { display: grid; grid-template-columns: 71px 65px 23px 21px; padding: 3px 0 0 6px; row-gap: 2px; }
    .cell { display: flex; align-items: center; gap: 4px; height: 18px; }
    .wide { grid-column: span 2; }
    .grid button { height: 20px; width: 20px; }
    .grid .on { background: #161616; color: #2d8ceb; }
  `];
  render() {
    const cell = (ic: string, label: string, cls = "") => html`<div class="cell ${cls}">${icon(ic, 17, 16)}${num(label, "0", "px")}</div>`;
    return html`
      <div class="tabs"><button class="tab on">Paragraph${menuIcon}</button></div>
      <div class="row aligns">${["left", "center", "right", "full-left", "full-center", "full-right", "full"].map((m, i) =>
        html`<button class=${i === 1 ? "on" : nothing} aria-label="Align ${m}">${alignIcon(m)}</button>`)}</div>
      <div class="rule"></div>
      <div class="grid">
        ${cell("indentL", "Indent left")}${cell("spaceB", "Space before")}${cell("firstLine", "First line indent", "wide")}
        ${cell("indentR", "Indent right")}${cell("spaceA", "Space after")}
        <button class="on" aria-label="Left to right">${icon("ltr", 16, 12)}</button>
        <button aria-label="Right to left">${icon("rtl", 16, 12)}</button>
      </div>`;
  }
}

/* ---------- timeline ---------- */

@customElement("timeline-panel")
class TimelinePanel extends LitElement {
  static styles = [base, css`
    :host { flex: 1; background: #232323; }
    .tab .x { margin-right: 10px; }
    .tab.second { margin-left: 35px; }
    .body { flex: 1; display: grid; grid-template-columns: 521px 1fr 18px; grid-template-rows: 33px 21px 1fr 14px; min-height: 0; }
    .tools { color: #3d3d3d; padding: 0 15px 0 106px; justify-content: space-between; }
    .find { display: flex; align-items: center; width: 218px; height: 19px; background: #161616; border: 1px solid #2d2d2d; color: #aaa; padding-left: 7px; }
    .find input { flex: 1; }
    .tools .set { display: flex; gap: 9px; }
    .tools .set button { width: 17px; }
    .tools .set button:nth-child(1), .tools .set button:nth-child(2), .tools .set button:nth-child(5) { margin-right: 7px; }
    .work { display: flex; align-items: flex-start; padding: 5px 5px 0 1px; }
    .knob { width: 6px; height: 9px; background: #2d8ceb; border-radius: 5px 0 0 5px; margin-right: 1px; flex: none; }
    .knob.end { border-radius: 0 5px 5px 0; margin: 0 0 0 1px; }
    .span { height: 9px; background: #686868; border-bottom: 1px solid #57524a; }
    .rest { flex: 1; height: 10px; background: #3f3c38; }
    .head { display: flex; align-items: center; background: #333; border: solid #0d0d0d; border-width: 1px 1px 1px 0; color: #aaa; font-size: 9px; padding-top: 2px; }
    .head > span { display: flex; align-items: center; height: 14px; border-right: 1px solid #191919; }
    .av { width: 68px; padding: 0 5px 0 5px; justify-content: space-around; }
    .lab { width: 31px; padding-left: 12px; } .hash { width: 32px; padding-left: 6px; } .src { width: 127px; padding-left: 6px; color: #8f8f8f; }
    .sw { width: 134px; padding: 0 13px 0 5px; justify-content: space-between; } .parent { width: 114px; padding-left: 6px; color: #8f8f8f; }
    .ruler { display: grid; grid-template-columns: repeat(11, 100fr) 58fr; padding-left: 7px; border-top: 1px solid #111; box-shadow: inset 0 -2px #232323, inset 0 -5px #090909; }
    .ruler i { width: 1px; height: 6px; background: #999; }
    .layers { border-right: 1px solid #0d0d0d; border-bottom: 1px solid #141414; }
    .graph { background: #323232; margin-left: 7px; border-top: 1px solid #0d0d0d; }
    .side { color: #a8a8a8; border-top: 1px solid #0d0d0d; padding: 1px 0 0 1px; }
    .shield { color: #4a4a4a; display: grid; place-items: center; }
    .foot { overflow: hidden; align-items: flex-start; color: #9a9a9a; gap: 3px; padding-left: 5px; }
    .foot button { width: 15px; height: 16px; }
    .foot .blue { color: #2d8ceb; }
    .foot .toggle { width: 130px; margin-left: 201px; border: 1px solid #2b2b2b; border-bottom: 0; }
    .nav { display: flex; overflow: hidden; background: #1e1e1e; color: #3a3a3a; align-items: flex-start; }
    .nav .zoomer { display: flex; align-items: center; width: 107px; height: 18px; background: #232323; flex: none; }
    .zoomer input { appearance: none; width: 43px; height: 2px; background: #3a3a3a; margin: 0 9px 0 8px; }
    .zoomer input::-webkit-slider-thumb { appearance: none; width: 10px; height: 10px; border-radius: 5px; border: 2px solid #aaa; background: #232323; }
    .scroll { width: 68%; height: 14px; border-radius: 7px; background: #323232; }
  `];
  render() {
    return html`
      <div class="tabs">
        <button class="tab on line closable"><span class="x">${icon("close", 7, 7)}</span>(none)${menuIcon}</button>
        <button class="tab second">Render Queue</button>
      </div>
      <div class="body">
        <div class="row tools">
          <label class="find">${icon("searchMenu", 15, 13)}<input aria-label="Search layers"></label>
          <span class="set">${["miniFlow", "draft3d", "hideShy", "frameBlend", "motionBlur", "graph"].map((n) => html`<button aria-label=${n}>${icon(n, 16, 15)}</button>`)}</span>
        </div>
        <div class="work"><span class="knob"></span><span class="span" style="width:76%"></span><span class="knob end"></span><span class="rest"></span></div>
        <span></span>

        <div class="head">
          <span class="av">${icon("eye", 11, 10)}${icon("speaker", 12, 11, 18)}${icon("dot", 10, 10)}${icon("lock", 11, 11)}</span>
          <span class="lab">${icon("tag", 12, 11)}</span>
          <span class="hash">#</span>
          <span class="src">Source Name</span>
          <span class="sw">${["shy", "sun", "quality", "fx", "frameBlend", "motionBlur", "adjust", "cube"].map((n) => icon(n, 12, 12))}</span>
          <span class="parent">Parent &amp; Link</span>
        </div>
        <div class="ruler">${Array.from({ length: 12 }, () => html`<i></i>`)}</div>
        <span class="shield">${icon("shield", 11, 13)}</span>

        <div class="layers"></div>
        <div class="graph"></div>
        <div class="side"><button aria-label="Marker">${icon("marker", 14, 13)}</button></div>

        <div class="row foot">
          <button class="blue" aria-label="Switches">${icon("switches", 12)}</button>
          <button aria-label="Modes">${icon("modes", 12)}</button>
          <button aria-label="In and out">${icon("brackets", 12)}</button>
          <button class="toggle">Toggle Switches / Modes</button>
        </div>
        <div class="nav">
          <span class="zoomer">${icon("hillSmall", 22, 16)}<input type="range" aria-label="Zoom" min="0" max="100" value="70">${icon("hillBig", 17, 9)}</span>
          <span class="scroll"></span>
        </div>
        <span></span>
      </div>`;
  }
}

/* ---------- root ---------- */

@customElement("app-root")
class AppRoot extends LitElement {
  static styles = css`
    :host {
      display: flex; flex-direction: column; min-height: 100vh; background: #171717;
      font: 11px/14px Lato, "Noto Sans", sans-serif; color: #9a9a9a;
    }
    .upper { display: flex; flex: 1; margin-top: 3px; }
    .side { display: flex; flex-direction: column; width: 410px; margin-left: 4px; flex: none; }
    .lower { display: flex; height: 319px; margin-top: 4px; }
  `;
  render() {
    return html`
      <title-bar></title-bar>
      <tool-bar></tool-bar>
      <div class="upper">
        <project-panel></project-panel>
        <composition-panel></composition-panel>
        <div class="side"><info-panel></info-panel><preview-panel></preview-panel><character-panel></character-panel></div>
      </div>
      <div class="lower"><timeline-panel></timeline-panel><paragraph-panel></paragraph-panel></div>`;
  }
}
